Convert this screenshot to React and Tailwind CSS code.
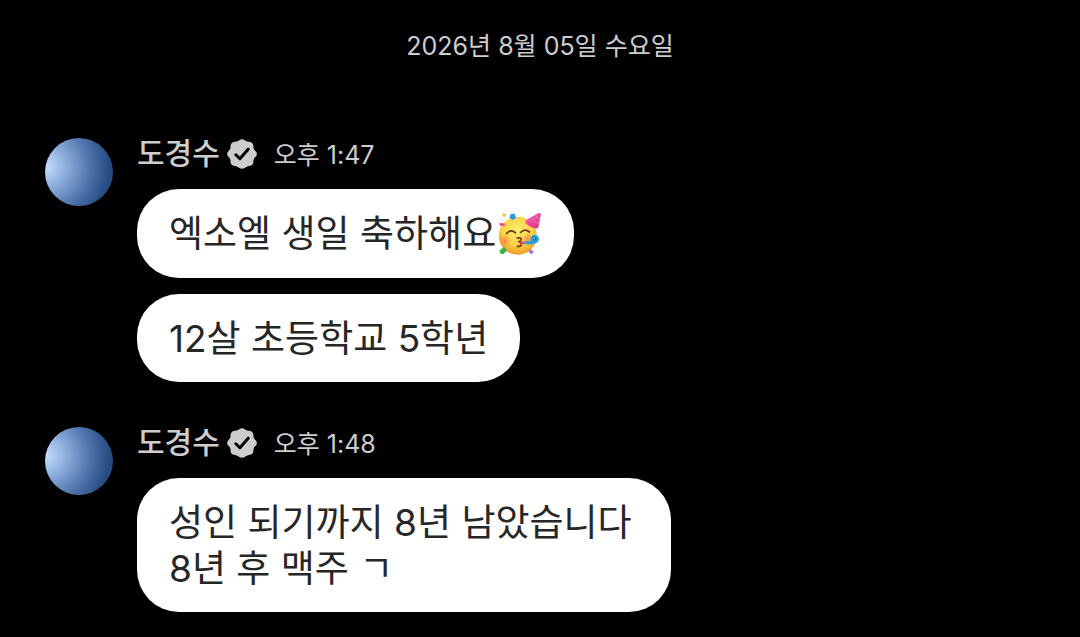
import React from "react";

function Verified() {
  return (
    <svg viewBox="0 0 30 30" className="size-[30px] shrink-0" role="img" aria-label="인증됨">
      <path
        fill="#cdcdcd"
        d="M15 0.2C17.400 0.200 18 1.900 20.300 2.600C22.500 3.300 24.300 2.800 25.700 4.700C27 6.500 25.900 7.900 26.900 10.100C27.900 12.300 29.900 12.700 29.900 15C29.900 17.300 27.900 17.700 26.900 19.900C25.900 22.100 27 23.500 25.700 25.300C24.300 27.200 22.500 26.700 20.300 27.400C18 28.100 17.400 29.800 15 29.800C12.600 29.800 12 28.100 9.700 27.400C7.500 26.700 5.700 27.200 4.300 25.300C3 23.500 4.100 22.100 3.100 19.900C2.100 17.700 0.100 17.300 0.100 15C0.100 12.700 2.100 12.300 3.100 10.100C4.100 7.900 3 6.500 4.300 4.700C5.700 2.800 7.500 3.300 9.700 2.600C12 1.900 12.600 0.200 15 0.200Z"
      />
      <path d="M8.800 15.800L12.900 19.800L21.200 10.200" fill="none" stroke="#000" strokeWidth="3" strokeLinecap="round" strokeLinejoin="round" />
    </svg>
  );
}

function PartyFace() {
  return (
    <svg viewBox="1 3 46 46" className="size-[46px] shrink-0" role="img" aria-label="파티 얼굴">
      <defs>
        <radialGradient id="face" cx="50%" cy="35%" r="65%">
          <stop offset="0" stopColor="#ffec70" />
          <stop offset="0.600" stopColor="#fed245" />
          <stop offset="1" stopColor="#ee9a2b" />
        </radialGradient>
        <radialGradient id="blush">
          <stop offset="0" stopColor="#f9804a" stopOpacity="0.850" />
          <stop offset="1" stopColor="#f9804a" stopOpacity="0" />
        </radialGradient>
        <linearGradient id="hat" x1="0" y1="0" x2="1" y2="1">
          <stop offset="0" stopColor="#ff6fb2" />
          <stop offset="1" stopColor="#d92b87" />
        </linearGradient>
      </defs>
      <circle cx="22.800" cy="27.800" r="19" fill="url(#face)" />
      <circle cx="9.500" cy="33" r="6.500" fill="url(#blush)" />
      <circle cx="33" cy="31" r="6" fill="url(#blush)" />
      <path d="M11.500 25.500Q16 20.500 20.500 24.800M25.500 24.500Q30 20 34.500 24" fill="none" stroke="#6b3a17" strokeWidth="1.700" strokeLinecap="round" />
      <path d="M22.300 30Q27 29.200 26 32.300Q25.500 33.300 23.800 33.600Q27.300 34.500 26.200 37Q25.200 39 22.500 38.300" fill="none" stroke="#873d16" strokeWidth="1.900" strokeLinecap="round" strokeLinejoin="round" />
      <path d="M25.500 33.800L31 33.300V36.200L25.500 35.700Z" fill="#ed4678" />
      <path d="M29.500 33.400L38 32.500L41 35.300L37 36.200L29.500 36.200Z" fill="#35afe3" />
      <path d="M32.500 33.400L33.300 36.200M35.500 33L36.300 36.200" stroke="#1677b7" strokeWidth="0.900" />
      <circle cx="39.800" cy="31" r="4.200" fill="#2ba5e0" />
      <circle cx="39.500" cy="30.700" r="1.900" fill="#1a6fb0" />
      <circle cx="39.200" cy="30.400" r="0.900" fill="#73d4f5" />
      <path d="M44.400 4.800Q46 5.200 45.800 7L43.300 19.600Q42.500 21.200 39.400 20.300Q32.500 18.300 30.100 14.200Q29.600 12.800 31.400 11.700L43 5.200Z" fill="url(#hat)" />
      <path d="M36 9.300Q38.800 14.300 44 15.600M40.200 7Q41.800 9.900 45.100 10.500" fill="none" stroke="#f98bc2" strokeWidth="0.700" />
      <path d="M8.200 5L11.200 6.300L10 9L7.200 7.800Z" fill="#f4c344" />
      <path d="M15.500 6.300L19.500 5.500L21 10L17.500 12L14.500 10Z" fill="#289bdf" />
      <path d="M4.200 14.900L9.800 15.400V18L5 17.700Z" fill="#ef4b7b" />
      <path d="M4.500 42.500L9 38.800L12 42.500L8.200 46.200L5.500 45.700Z" fill="#3eb34b" />
      <path d="M34.700 41.300L38.900 43.500L36.400 46.200L33.700 43.700Z" fill="#a868df" />
    </svg>
  );
}

function Bubble({ wide = false, children }) {
  return (
    <p
      className={`${wide ? "w-[534px]" : "w-fit"} max-w-full rounded-[42px] bg-white px-8 pt-[22px] pb-5 text-[37px] leading-[46px] text-[#262626]`}
    >
      {children}
    </p>
  );
}

function MessageGroup({ name, time, children }) {
  return (
    <article className="flex items-start gap-6">
      <div className="size-[68px] shrink-0 rounded-full bg-[radial-gradient(circle_at_0%_42%,#c8e0ff_0%,#86a7d8_30%,#4e73aa_58%,#274c82_82%,#1f4478_100%)]" />
      <div className="min-w-0">
        <header className="flex h-8 items-center">
          <h2 className="pb-0.5 text-[30px] leading-8 font-medium text-[#cdcdcd]">{name}</h2>
          <span className="ml-[7px] flex">
            <Verified />
          </span>
          <time className="ml-[17px] pt-0.5 text-[25px] leading-8 text-[#cdcdcd]">{time}</time>
        </header>
        <div className="mt-[19px] flex flex-col gap-4">{children}</div>
      </div>
    </article>
  );
}

export default function App() {
  return (
    <main className="min-h-screen bg-black px-[45px] pt-[30px] pb-6 font-['Inter','Noto_Sans_CJK_KR',sans-serif]">
      <p className="text-center text-[25px] leading-8 text-[#cdcdcd]">2026년 8월 05일 수요일</p>
      <section className="mt-[76px] flex flex-col gap-[45px]">
        <MessageGroup name="도경수" time="오후 1:47">
          <Bubble>
            <span className="flex min-h-[47px] items-start">
              엑소엘 생일 축하해요
              <PartyFace />
            </span>
          </Bubble>
          <Bubble>12살 초등학교 5학년</Bubble>
        </MessageGroup>
        <MessageGroup name="도경수" time="오후 1:48">
          <Bubble wide>
            성인 되기까지 8년 남았습니다
            <br />
            8년 후 맥주 ㄱ
          </Bubble>
        </MessageGroup>
      </section>
    </main>
  );
}
